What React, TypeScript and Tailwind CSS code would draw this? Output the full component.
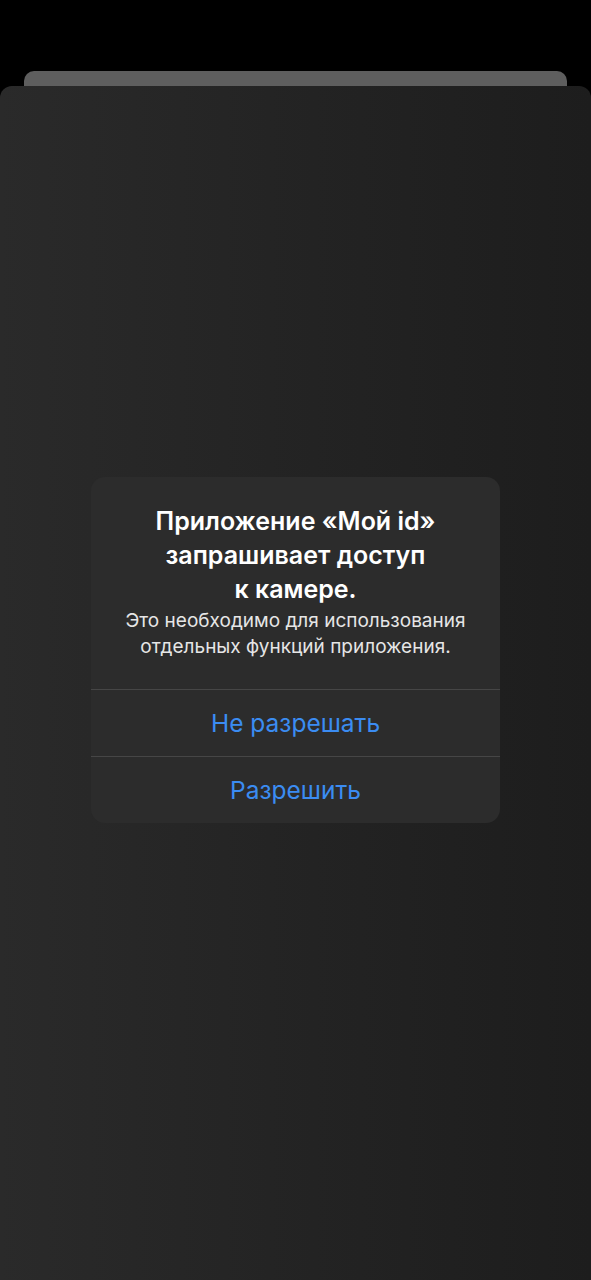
export default function App() {
  return (
    <div
      className="flex h-[1280px] w-full flex-col overflow-hidden bg-black pt-[71px]"
      style={{ fontFamily: 'Inter, "Noto Sans", sans-serif' }}
    >
      <div className="mx-[24px] h-[15px] rounded-t-[10px] bg-[#5e5e5e]" />
      <div className="flex flex-1 flex-col items-center rounded-t-[12px] bg-gradient-to-r from-[#2a2a2a] to-[#1d1d1d] pt-[391px]">
        <div className="w-[409px] overflow-hidden rounded-[14px] bg-[#2c2c2c]">
          <div className="px-2 pt-[27px] pb-[29px] text-center">
            <h2 className="text-[25px] font-semibold leading-[34px] text-white">
              Приложение «Мой id»
              <br />
              запрашивает доступ
              <br />к камере.
            </h2>
            <p className="mt-[2px] text-[19px] leading-[26px] text-[#e6e6e6]">
              Это необходимо для использования
              <br />
              отдельных функций приложения.
            </p>
          </div>
          <button className="block h-[67px] w-full border-t border-[#464646] text-[24.5px] text-[#3b8cf2]">
            Не разрешать
          </button>
          <button className="block h-[67px] w-full border-t border-[#464646] text-[24.5px] text-[#3b8cf2]">
            Разрешить
          </button>
        </div>
      </div>
    </div>
  )
}
